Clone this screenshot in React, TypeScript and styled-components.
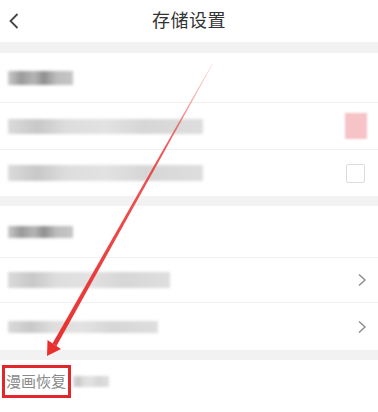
import React from "react";
import styled, { createGlobalStyle } from "styled-components";

const Global = createGlobalStyle`
  html, body { margin: 0; padding: 0; background: #ffffff; }
  body { font-family: "Noto Sans CJK SC", "Noto Sans", sans-serif; }
`;

const Page = styled.div`
  position: relative;
  width: 378px;
  height: 412px;
  overflow: hidden;
  background: #ffffff;
  display: flex;
  flex-direction: column;
`;

const Header = styled.div`
  height: 42px;
  flex: none;
  display: grid;
  grid-template-columns: 40px 1fr 40px;
  align-items: center;
`;

const Back = styled.div`
  display: flex;
  align-items: center;
  padding-left: 8px;
  height: 100%;
`;

const Title = styled.div`
  text-align: center;
  font-size: 18px;
  color: #333333;
  letter-spacing: 0.5px;
  margin-top: -4px;
`;

const Gap = styled.div<{ $h: number }>`
  height: ${(p) => p.$h}px;
  flex: none;
  background: #f2f2f2;
`;

const Section = styled.div`
  display: flex;
  flex-direction: column;
  flex: none;
`;

const Row = styled.div<{ $h: number; $line?: boolean }>`
  height: ${(p) => p.$h}px;
  flex: none;
  box-sizing: border-box;
  display: flex;
  align-items: center;
  justify-content: space-between;
  padding: 0 11px 0 8px;
  border-top: ${(p) => (p.$line ? "1px solid #f0f0f0" : "none")};
`;

const Blur = styled.div<{ $w: number; $h: number; $dark?: boolean }>`
  width: ${(p) => p.$w}px;
  height: ${(p) => p.$h}px;
  background: ${(p) =>
    p.$dark
      ? "linear-gradient(90deg, #c9c9c9 0%, #9a9a9a 20%, #b5b5b5 40%, #8f8f8f 55%, #bdbdbd 75%, #c6c6c6 100%)"
      : "linear-gradient(90deg, #dadada 0%, #c8c8c8 15%, #dddddd 30%, #e2e2e2 50%, #d6d6d6 70%, #dedede 100%)"};
  filter: blur(1.5px);
`;

const CheckOn = styled.div`
  width: 22px;
  height: 26px;
  background: #f6c3c7;
  filter: blur(1.2px);
`;

const CheckOff = styled.div`
  width: 19px;
  height: 19px;
  margin-right: 2px;
  box-sizing: border-box;
  border: 1px solid #dcdcdc;
  border-radius: 2px;
`;

const LastRow = styled.div`
  height: 42px;
  flex: none;
  display: flex;
  align-items: center;
  gap: 2px;
  padding-left: 2px;
`;

const Label = styled.span`
  box-sizing: border-box;
  border: 3px solid #e3262b;
  padding: 2px 2px 3px 1px;
  font-size: 15px;
  line-height: 22px;
  color: #8a8a8a;
`;

const Overlay = styled.svg`
  position: absolute;
  left: 0;
  top: 0;
  pointer-events: none;
`;

const Chevron = () => (
  <svg width="10" height="14" viewBox="0 0 10 14">
    <path d="M2 1.5 L8 7 L2 12.5" fill="none" stroke="#8c8c8c" strokeWidth="1.4" />
  </svg>
);

export default function App() {
  return (
    <>
      <Global />
      <Page>
        <Header>
          <Back>
            <svg width="12" height="18" viewBox="0 0 12 18">
              <path d="M9.5 2 L2.5 9 L9.5 16" fill="none" stroke="#444" strokeWidth="1.8" />
            </svg>
          </Back>
          <Title>存储设置</Title>
          <div />
        </Header>
        <Gap $h={11} />
        <Section>
          <Row $h={49}>
            <Blur $w={65} $h={14} $dark />
          </Row>
          <Row $h={47} $line>
            <Blur $w={195} $h={15} />
            <CheckOn />
          </Row>
          <Row $h={47} $line>
            <Blur $w={195} $h={16} />
            <CheckOff />
          </Row>
        </Section>
        <Gap $h={10} />
        <Section>
          <Row $h={51}>
            <Blur $w={65} $h={12} $dark />
          </Row>
          <Row $h={45} $line>
            <Blur $w={162} $h={16} />
            <Chevron />
          </Row>
          <Row $h={48} $line>
            <Blur $w={150} $h={12} />
            <Chevron />
          </Row>
        </Section>
        <Gap $h={10} />
        <LastRow>
          <Label>漫画恢复</Label>
          <Blur $w={36} $h={11} />
        </LastRow>
        <Overlay width="378" height="412" viewBox="0 0 378 412">
          <defs>
            <linearGradient id="fade" x1="212" y1="64" x2="50" y2="350" gradientUnits="userSpaceOnUse">
              <stop offset="0" stopColor="#e8302f" stopOpacity="0.15" />
              <stop offset="0.3" stopColor="#e8302f" stopOpacity="0.8" />
              <stop offset="1" stopColor="#e8302f" stopOpacity="1" />
            </linearGradient>
          </defs>
          <polygon points="212,64 212.6,64.4 56.5,346 52.5,343.5" fill="url(#fade)" />
          <polygon points="47,356 47.5,340 61,349" fill="#e8302f" />
        </Overlay>
      </Page>
    </>
  );
}
